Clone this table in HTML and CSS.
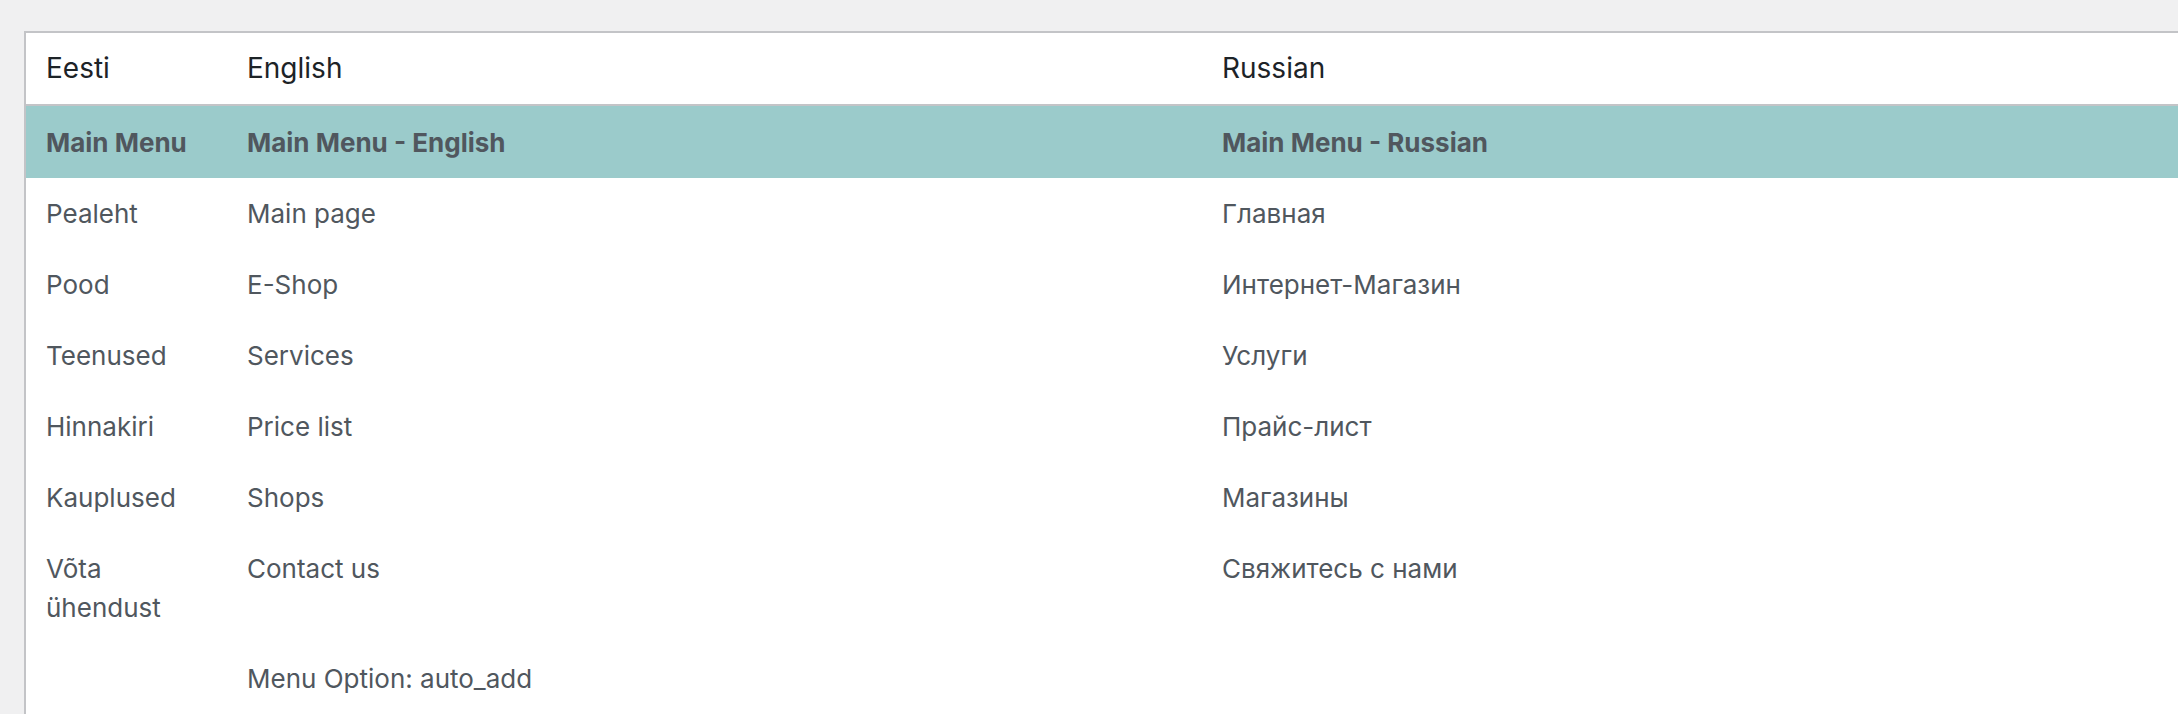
FILE: index.html
```html
<!DOCTYPE html>
<html lang="en">
<head>
<meta charset="utf-8">
<title>Menus</title>
<link rel="stylesheet" href="styles.css">
</head>
<body>
<div class="wrap">
  <table class="menus">
    <colgroup>
      <col class="c-et">
      <col class="c-en">
      <col class="c-ru">
    </colgroup>
    <thead>
      <tr>
        <th>Eesti</th>
        <th>English</th>
        <th>Russian</th>
      </tr>
    </thead>
    <tbody>
      <tr class="menu-title">
        <td>Main Menu</td>
        <td>Main Menu - English</td>
        <td>Main Menu - Russian</td>
      </tr>
      <tr><td>Pealeht</td><td>Main page</td><td>Главная</td></tr>
      <tr><td>Pood</td><td>E-Shop</td><td>Интернет-Магазин</td></tr>
      <tr><td>Teenused</td><td>Services</td><td>Услуги</td></tr>
      <tr><td>Hinnakiri</td><td>Price list</td><td>Прайс-лист</td></tr>
      <tr><td>Kauplused</td><td>Shops</td><td>Магазины</td></tr>
      <tr><td>Võta ühendust</td><td>Contact us</td><td>Свяжитесь с нами</td></tr>
      <tr><td></td><td>Menu Option: auto_add</td><td></td></tr>
    </tbody>
  </table>
</div>
</body>
</html>
```
FILE: styles.css
```css
html, body {
  margin: 0;
  padding: 0;
  overflow: hidden;
  background: #f0f0f1;
}
body {
  font-family: Inter, "Noto Sans", "Liberation Sans", sans-serif;
  color: #50575e;
}
.wrap {
  padding: 31px 0 0 24px;
}
.menus {
  table-layout: fixed;
  width: 2175px;
  border-collapse: separate;
  border-spacing: 0;
  background: #fff;
  border: 2px solid #c3c4c7;
  border-bottom: none;
}
.c-et { width: 201px; }
.c-en { width: 975px; }
.c-ru { width: 995px; }
.menus th {
  text-align: left;
  font-weight: 400;
  font-size: 28px;
  line-height: 39px;
  color: #1d2327;
  padding: 16px 20px;
  border-bottom: 2px solid #c3c4c7;
}
.menus td {
  font-size: 26px;
  line-height: 39px;
  padding: 16px 20px;
  vertical-align: top;
  color: #50575e;
}
.menu-title td {
  background: #9bcbcb;
  font-weight: 700;
  padding-top: 17px;
  padding-bottom: 16px;
}
```
